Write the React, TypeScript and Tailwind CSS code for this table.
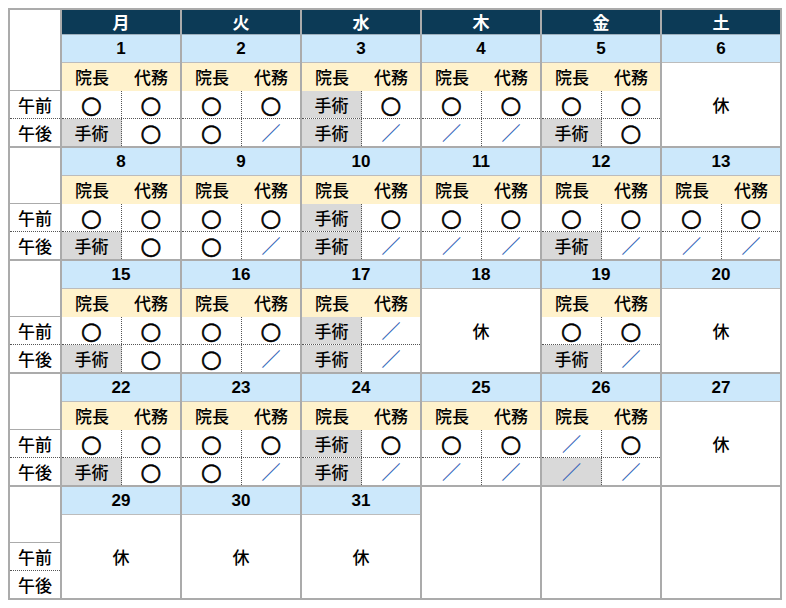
import type { ReactElement } from 'react';

type Mark = 'o' | 's' | '/' | 'g/';

type Day =
  | { kind: 'work'; date: number; am: [Mark, Mark]; pm: [Mark, Mark] }
  | { kind: 'off'; date: number }
  | { kind: 'none' };

const WEEKDAYS = ['月', '火', '水', '木', '金', '土'];

const WEEKS: Day[][] = [
  [
    { kind: 'work', date: 1, am: ['o', 'o'], pm: ['s', 'o'] },
    { kind: 'work', date: 2, am: ['o', 'o'], pm: ['o', '/'] },
    { kind: 'work', date: 3, am: ['s', 'o'], pm: ['s', '/'] },
    { kind: 'work', date: 4, am: ['o', 'o'], pm: ['/', '/'] },
    { kind: 'work', date: 5, am: ['o', 'o'], pm: ['s', 'o'] },
    { kind: 'off', date: 6 },
  ],
  [
    { kind: 'work', date: 8, am: ['o', 'o'], pm: ['s', 'o'] },
    { kind: 'work', date: 9, am: ['o', 'o'], pm: ['o', '/'] },
    { kind: 'work', date: 10, am: ['s', 'o'], pm: ['s', '/'] },
    { kind: 'work', date: 11, am: ['o', 'o'], pm: ['/', '/'] },
    { kind: 'work', date: 12, am: ['o', 'o'], pm: ['s', '/'] },
    { kind: 'work', date: 13, am: ['o', 'o'], pm: ['/', '/'] },
  ],
  [
    { kind: 'work', date: 15, am: ['o', 'o'], pm: ['s', 'o'] },
    { kind: 'work', date: 16, am: ['o', 'o'], pm: ['o', '/'] },
    { kind: 'work', date: 17, am: ['s', '/'], pm: ['s', '/'] },
    { kind: 'off', date: 18 },
    { kind: 'work', date: 19, am: ['o', 'o'], pm: ['s', '/'] },
    { kind: 'off', date: 20 },
  ],
  [
    { kind: 'work', date: 22, am: ['o', 'o'], pm: ['s', 'o'] },
    { kind: 'work', date: 23, am: ['o', 'o'], pm: ['o', '/'] },
    { kind: 'work', date: 24, am: ['s', 'o'], pm: ['s', '/'] },
    { kind: 'work', date: 25, am: ['o', 'o'], pm: ['/', '/'] },
    { kind: 'work', date: 26, am: ['/', 'o'], pm: ['g/', '/'] },
    { kind: 'off', date: 27 },
  ],
  [
    { kind: 'off', date: 29 },
    { kind: 'off', date: 30 },
    { kind: 'off', date: 31 },
    { kind: 'none' },
    { kind: 'none' },
    { kind: 'none' },
  ],
];

function MarkCell({ mark, left }: { mark: Mark; left?: boolean }): ReactElement {
  const grey = mark === 's' || mark === 'g/';
  return (
    <div
      className={`flex h-full items-center justify-center ${left ? 'w-[60px] border-r border-dotted border-[#555]' : 'flex-1'} ${grey ? 'bg-[#d9d9d9]' : ''}`}
    >
      {mark === 'o' && (
        <span className="font-['DejaVu_Sans',sans-serif] text-[24px] leading-none [-webkit-text-stroke:0.6px_#000]">
          ○
        </span>
      )}
      {mark === 's' && <span>手術</span>}
      {(mark === '/' || mark === 'g/') && (
        <span className="text-[19px] font-bold leading-none text-[#3565b8]">／</span>
      )}
    </div>
  );
}

function DayColumn({ day }: { day: Day }): ReactElement {
  if (day.kind === 'none') {
    return <div className="w-[120px] border-l-2 border-[#ababab] bg-white" />;
  }
  return (
    <div className="flex w-[120px] flex-col border-l-2 border-[#ababab]">
      <div className="flex h-[28px] items-center justify-center border-b border-[#bcbcbc] bg-[#cce8fb] font-['Liberation_Sans',sans-serif] font-bold">
        {day.date}
      </div>
      {day.kind === 'off' ? (
        <div className="flex flex-1 items-center justify-center">休</div>
      ) : (
        <>
          <div className="flex h-[28px] items-center bg-[#fff2cc]">
            <div className="flex w-[60px] justify-center">院長</div>
            <div className="flex flex-1 justify-center">代務</div>
          </div>
          <div className="flex h-[28px] border-b border-dotted border-[#555]">
            <MarkCell mark={day.am[0]} left />
            <MarkCell mark={day.am[1]} />
          </div>
          <div className="flex h-[27px]">
            <MarkCell mark={day.pm[0]} left />
            <MarkCell mark={day.pm[1]} />
          </div>
        </>
      )}
    </div>
  );
}

function LabelColumn(): ReactElement {
  return (
    <div className="flex w-[50px] flex-col">
      <div className="h-[56px] border-b border-[#ababab]" />
      <div className="flex h-[28px] items-center justify-center border-b border-dotted border-[#555]">午前</div>
      <div className="flex h-[27px] items-center justify-center">午後</div>
    </div>
  );
}

export default function App(): ReactElement {
  return (
    <div className="min-h-[608px] bg-white p-2 font-['Noto_Sans_CJK_JP',sans-serif] text-[17px] font-medium text-black">
      <div className="w-fit border-2 border-[#ababab] bg-white">
        <div className="flex">
          <div className="w-[50px]" />
          {WEEKDAYS.map((w) => (
            <div
              key={w}
              className="flex h-[25px] w-[120px] items-center justify-center border-b border-l-2 border-b-[#9fb0bd] border-l-[#ababab] bg-[#0c3a56] font-bold text-white"
            >
              {w}
            </div>
          ))}
        </div>
        {WEEKS.map((week, i) => (
          <div key={i} className={`flex ${i > 0 ? 'border-t-2 border-[#ababab]' : ''}`}>
            <LabelColumn />
            {week.map((day, j) => (
              <DayColumn key={j} day={day} />
            ))}
          </div>
        ))}
      </div>
    </div>
  );
}
